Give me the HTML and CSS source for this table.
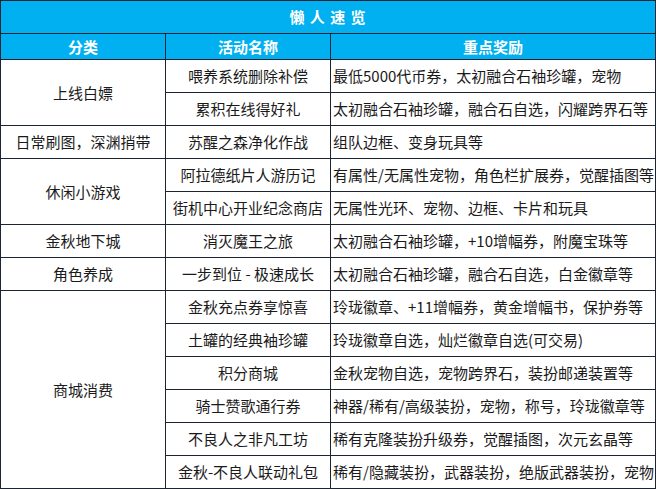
FILE: index.html
```html
<!DOCTYPE html>
<html lang="zh">
<head>
<meta charset="utf-8">
<link rel="stylesheet" href="styles.css">
</head>
<body>
<table class="sheet">
  <colgroup>
    <col class="c1"><col class="c2"><col class="c3">
  </colgroup>
  <tr class="title-row"><td colspan="3">懒 人 速 览</td></tr>
  <tr class="head-row"><td>分类</td><td>活动名称</td><td>重点奖励</td></tr>
  <tr><td class="cat" rowspan="2">上线白嫖</td><td class="act">喂养系统删除补偿</td><td class="rew">最低5000代币券，太初融合石袖珍罐，宠物</td></tr>
  <tr><td class="act">累积在线得好礼</td><td class="rew">太初融合石袖珍罐，融合石自选，闪耀跨界石等</td></tr>
  <tr><td class="cat">日常刷图，深渊捎带</td><td class="act">苏醒之森净化作战</td><td class="rew">组队边框、变身玩具等</td></tr>
  <tr><td class="cat" rowspan="2">休闲小游戏</td><td class="act">阿拉德纸片人游历记</td><td class="rew">有属性/无属性宠物，角色栏扩展券，觉醒插图等</td></tr>
  <tr><td class="act">街机中心开业纪念商店</td><td class="rew">无属性光环、宠物、边框、卡片和玩具</td></tr>
  <tr><td class="cat">金秋地下城</td><td class="act">消灭魔王之旅</td><td class="rew">太初融合石袖珍罐，+10增幅券，附魔宝珠等</td></tr>
  <tr><td class="cat">角色养成</td><td class="act">一步到位 - 极速成长</td><td class="rew">太初融合石袖珍罐，融合石自选，白金徽章等</td></tr>
  <tr><td class="cat" rowspan="6">商城消费</td><td class="act">金秋充点券享惊喜</td><td class="rew">玲珑徽章、+11增幅券，黄金增幅书，保护券等</td></tr>
  <tr><td class="act">土罐的经典袖珍罐</td><td class="rew">玲珑徽章自选，灿烂徽章自选(可交易)</td></tr>
  <tr><td class="act">积分商城</td><td class="rew">金秋宠物自选，宠物跨界石，装扮邮递装置等</td></tr>
  <tr><td class="act">骑士赞歌通行券</td><td class="rew">神器/稀有/高级装扮，宠物，称号，玲珑徽章等</td></tr>
  <tr><td class="act">不良人之非凡工坊</td><td class="rew">稀有克隆装扮升级券，觉醒插图，次元玄晶等</td></tr>
  <tr><td class="act">金秋-不良人联动礼包</td><td class="rew">稀有/隐藏装扮，武器装扮，绝版武器装扮，宠物</td></tr>
</table>
</body>
</html>
```
FILE: styles.css
```css
html, body {
  margin: 0;
  padding: 0;
  background: #ffffff;
}
.sheet {
  border-collapse: separate;
  border-spacing: 0;
  table-layout: fixed;
  width: 656px;
  border-top: 1px solid #1b2430;
  border-left: 1px solid #1b2430;
  font-family: "Noto Sans CJK SC", "Noto Sans", sans-serif;
  font-size: 15px;
  color: #1a1a1a;
}
.c1 { width: 165px; }
.c2 { width: 165px; }
.c3 { width: 325px; }
.sheet td {
  box-sizing: border-box;
  border-right: 1px solid #1b2430;
  border-bottom: 1px solid #1b2430;
  padding: 0;
  height: 33px;
  line-height: 20px;
  text-align: center;
  vertical-align: middle;
  white-space: nowrap;
  overflow: hidden;
}
.title-row td {
  background: #00b0f0;
  color: #ffffff;
  font-weight: bold;
  letter-spacing: 1px;
  height: 33px;
}
.head-row td {
  background: #00b0f0;
  color: #ffffff;
  font-weight: bold;
  height: 26px;
}
.sheet td.rew {
  text-align: left;
  padding-left: 2px;
}
```
